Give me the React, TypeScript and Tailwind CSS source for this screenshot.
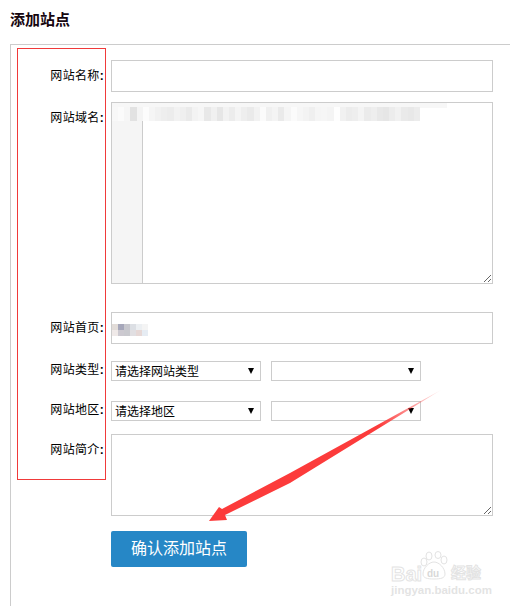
const FONT = "font-['Liberation_Sans','Noto_Sans_CJK_SC',sans-serif]"

// 打码区域 (6px 马赛克)
const DOMAIN_BLUR = [
  'f8f8f8', 'fbfbfb', 'f6f6f6', 'e2e2e2', 'f4f4f4', 'fcfcfc', 'f5f5f5', 'f1f1f1', 'eeeeee', 'ececec',
  'f2f2f2', 'efefef', 'eaeaea', 'f3f3f3', 'f6f6f6', 'e8e8e8', 'f0f0f0', 'e6e6e6', 'f2f2f2', 'ececec',
  'f4f4f4', 'eeeeee', 'eaeaea', 'f2f2f2', 'fbfbfb', 'f0f0f0', 'f4f4f4', 'eaeaea', 'f5f5f5', 'fbfbfb',
  'f6f6f6', 'f3f3f3', 'efefef', 'f5f5f5', 'f6f6f6', 'f4f4f4', 'fefefe', 'f1f1f1', 'ececec', 'eeeeee',
  'f4f4f4', 'ebebeb', 'eeeeee', 'e8e8e8', 'e6e6e6', 'ececec', 'f1f1f1', 'eaeaea', 'e8e8e8', 'ececec',
]
const HOME_BLUR_TOP = ['e2dcd8', 'a6a7ba', 'c7c7cd', 'dcdfe4', 'eceff2', 'f4f4f4']
const HOME_BLUR_BOTTOM = ['efe9e8', 'ccc9d0', 'c9c9ce', 'e1dfe2', 'e6d8d6', 'e6ecf3']

function Label({ text }: { text: string }) {
  return (
    <label className="block w-[94px] h-8 shrink-0 pr-[1px] text-right text-[12px] leading-[33px] tracking-[0.33px] text-black">
      {text}<span className="font-bold">:</span>
    </label>
  )
}

function Select({ text }: { text?: string }) {
  return (
    <div className="relative w-[150px] h-5">
      <select className="block w-full h-full appearance-none bg-white border border-[#ccc] pl-[3px] pt-[1px] text-[12px] leading-[16px] text-black outline-none">
        <option>{text ?? ''}</option>
      </select>
      <svg className="absolute right-[7px] top-[7px] pointer-events-none" width="6" height="6" viewBox="0 0 6 6">
        <path d="M0 0h6L3 6z" fill="#000" />
      </svg>
    </div>
  )
}

function Watermark() {
  return (
    <div className="absolute left-[391px] top-[551px] w-[95px] h-[46px] pointer-events-none opacity-[0.32]">
      <span className="absolute left-0 top-[13px] text-[20px] leading-[20px] font-bold text-white [-webkit-text-stroke:1px_#aaa]">Bai</span>
      <svg className="absolute left-[29px] top-0" width="32" height="30" viewBox="0 0 32 30">
        <g fill="#fff" stroke="#aaa">
          <ellipse cx="9" cy="5" rx="3" ry="4" />
          <ellipse cx="18" cy="4" rx="3" ry="3.5" />
          <ellipse cx="24" cy="9" rx="3" ry="4" />
          <ellipse cx="4" cy="11" rx="3" ry="4" />
          <path d="M14 11c5 0 11 6 11 12 0 4-4 5-11 5S3 27 3 23c0-6 6-12 11-12z" />
        </g>
      </svg>
      <span className="absolute left-[36px] top-[17px] text-[10px] leading-[12px] font-bold text-[#888]">du</span>
      <span className="absolute left-[60px] top-[13px] text-[15px] leading-[18px] font-bold text-white [-webkit-text-stroke:1px_#aaa]">经验</span>
      <span className="absolute left-0 top-[33px] text-[11.5px] leading-[13px] font-bold text-[#aaa] whitespace-nowrap">jingyan.baidu.com</span>
    </div>
  )
}

export default function App() {
  return (
    <div className={`relative w-[510px] h-[606px] overflow-hidden bg-white ${FONT}`}>
      <div className="h-[44px] pl-[10px] pt-3">
        <h1 className="text-[15px] leading-4 font-bold text-[#16060f]">添加站点</h1>
      </div>

      <div className="ml-[10px] h-[562px] border-l border-t border-[#ccc] pt-[15px]">
        <div className="flex gap-[6px]">
          <Label text="网站名称" />
          <input className="w-[382px] h-8 border border-[#ccc] bg-white outline-none" />
        </div>

        <div className="flex gap-[6px] mt-[10px]">
          <Label text="网站域名" />
          <div className="relative flex w-[382px] h-[182px] border border-[#ccc]">
            <div className="w-[31px] shrink-0 bg-[#f5f5f5] border-r border-[#ccc]" />
            <textarea className="flex-1 resize outline-none bg-white" />
            <div className="absolute left-0 top-0 w-[335px] h-[5px] bg-[#f7f7f7]" />
            <div className="absolute left-0 top-[4px] flex h-[14px]">
              {DOMAIN_BLUR.map((c, i) => (
                <div key={i} className="w-[6.16px] h-full" style={{ backgroundColor: `#${c}` }} />
              ))}
            </div>
          </div>
        </div>

        <div className="flex gap-[6px] mt-[28px]">
          <Label text="网站首页" />
          <div className="relative w-[382px] h-8 border border-[#ccc]">
            <input className="w-full h-full outline-none bg-white" />
            <div className="absolute left-0 top-[11px] flex">
              {HOME_BLUR_TOP.map((c, i) => (
                <div key={i} className="w-[6px] h-[6px]" style={{ backgroundColor: `#${c}` }} />
              ))}
            </div>
            <div className="absolute left-0 top-[17px] flex">
              {HOME_BLUR_BOTTOM.map((c, i) => (
                <div key={i} className="w-[6px] h-[6px]" style={{ backgroundColor: `#${c}` }} />
              ))}
            </div>
          </div>
        </div>

        <div className="flex gap-[6px] mt-[17px] h-5">
          <div className="shrink-0 -mt-[7px]"><Label text="网站类型" /></div>
          <div className="flex gap-[10px]">
            <Select text="请选择网站类型" />
            <Select />
          </div>
        </div>

        <div className="flex gap-[6px] mt-5 h-5">
          <div className="shrink-0 -mt-[7px]"><Label text="网站地区" /></div>
          <div className="flex gap-[10px]">
            <Select text="请选择地区" />
            <Select />
          </div>
        </div>

        <div className="flex gap-[6px] mt-[13px]">
          <Label text="网站简介" />
          <textarea className="block w-[382px] h-[82px] border border-[#ccc] bg-white resize outline-none" />
        </div>

        <div className="ml-[100px] mt-[15px]">
          <button className="w-[136px] h-9 rounded-[2px] bg-[#2687c6] text-white text-[16px]">确认添加站点</button>
        </div>
      </div>

      {/* 红框 标注 */}
      <div className="absolute left-[17px] top-[48px] w-[89px] h-[432px] border border-[#f03a3a] pointer-events-none" />

      {/* 箭头 标注 */}
      <svg className="absolute left-0 top-0 pointer-events-none" width="510" height="606" viewBox="0 0 510 606">
        <defs>
          <linearGradient id="arrowFade" gradientUnits="userSpaceOnUse" x1="441" y1="390" x2="380" y2="428">
            <stop offset="0" stopColor="#fc3b3b" stopOpacity="0.1" />
            <stop offset="1" stopColor="#fc3b3b" />
          </linearGradient>
        </defs>
        <path d="M441 390L290 473L222 509L219 507L209 521L227 520L225 515L290 483Z" fill="url(#arrowFade)" />
      </svg>

      <Watermark />
    </div>
  )
}
